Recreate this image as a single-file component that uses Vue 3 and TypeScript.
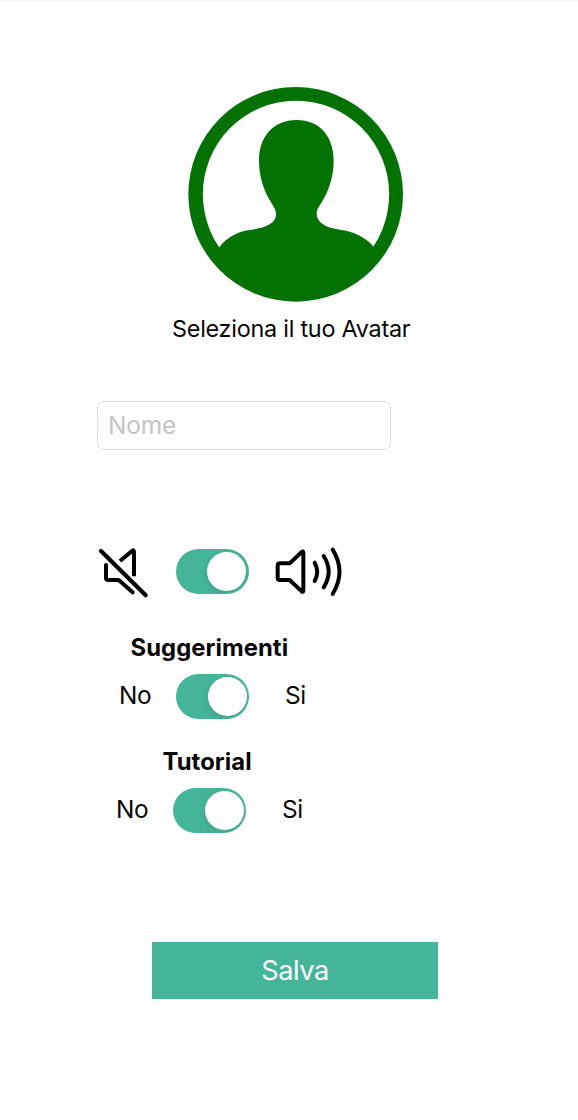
<script setup lang="ts">
import { ref } from 'vue'

interface Option {
  key: string
  title: string
  on: boolean
}

const name = ref('')
const audio = ref(true)
const options = ref<Option[]>([
  { key: 'hints', title: 'Suggerimenti', on: true },
  { key: 'tutorial', title: 'Tutorial', on: true },
])
</script>

<template>
  <main class="screen">
    <svg class="avatar" viewBox="0 0 690 690">
      <circle cx="347" cy="343" r="322" fill="#037103" />
      <ellipse cx="348" cy="343" rx="279.500" ry="281" fill="#fefefe" />
      <path
        fill="#037103"
        d="M350 120C420 120 461 170 461 242C461 290 446 333 425 367C415 383 410 390 410 402C411 427 437 444 480 449C520 454 556 471 579 498C575 560 460 640 348 640C236 640 122 560 118 501C143 468 177 454 213 449C260 443 287 429 288 405C289 392 283 383 273 367C252 333 237 290 237 242C237 170 280 120 350 120Z"
      />
    </svg>
    <p class="caption">Seleziona il tuo Avatar</p>

    <input v-model="name" class="name" type="text" placeholder="Nome" />

    <div class="audio">
      <svg class="muted" viewBox="0 0 170 210" fill="none" stroke="#000" stroke-linecap="round" stroke-linejoin="round">
        <g stroke-width="12">
          <path d="M90 78L127 47Q132 44 132 51V124" stroke-linecap="butt" />
          <path d="M48 90V128Q48 135 55 135H86L128 172" />
        </g>
        <path d="M33 48L167 181" stroke-width="12.500" />
      </svg>
      <button class="switch" :class="{ on: audio }" type="button" @click="audio = !audio"><span class="knob"></span></button>
      <svg class="loud" viewBox="0 0 300 210" fill="none" stroke="#000" stroke-width="12" stroke-linecap="round" stroke-linejoin="round">
        <path d="M60 85H89L125 51Q130 47 130 54V166Q130 173 125 169L89 135H60Q53 135 53 128V92Q53 85 60 85Z" />
        <path d="M164 83Q179 110 164 138M191 63Q221 110 191 157M218 44Q259 110 218 177" />
      </svg>
    </div>

    <section v-for="item in options" :key="item.key" class="option" :class="item.key">
      <h2>{{ item.title }}</h2>
      <div class="choice">
        <span class="no">No</span>
        <button class="switch" :class="{ on: item.on }" type="button" @click="item.on = !item.on"><span class="knob"></span></button>
        <span class="yes">Si</span>
      </div>
    </section>

    <button class="save" type="button">Salva</button>
  </main>
</template>

<style>
body {
  background: #fefefe;
}
</style>

<style scoped>
.screen {
  box-sizing: border-box;
  width: 578px;
  height: 1120px;
  padding-top: 79px;
  border-top: 1px solid #f5f5f5;
  display: flex;
  flex-direction: column;
  align-items: flex-start;
  overflow: hidden;
  background: #fefefe;
  color: #080808;
  font-family: Inter, "Liberation Sans", sans-serif;
}
.avatar {
  flex: none;
  width: 230px;
  height: 230px;
  margin-left: 180px;
}
.caption {
  margin: 3px 0 0 172px;
  font-size: 23.4px;
  line-height: 32px;
  letter-spacing: -0.25px;
  white-space: nowrap;
}
.name {
  box-sizing: border-box;
  width: 294px;
  height: 49px;
  margin: 56px 0 0 97px;
  padding: 0 10px 1px;
  border: 1px solid #dedede;
  border-radius: 7px;
  outline: none;
  background: #fefefe;
  color: #080808;
  font: 24.5px Inter, "Liberation Sans", sans-serif;
  letter-spacing: -0.2px;
}
.name::placeholder {
  color: #c5c5c7;
  opacity: 1;
}
.audio {
  display: flex;
  align-items: flex-start;
  height: 70px;
  margin: 85px 0 0 90px;
}
.muted {
  overflow: visible;
  width: 56.667px;
  height: 70px;
}
.loud {
  width: 100px;
  height: 70px;
  margin-left: 11px;
}
.switch {
  box-sizing: border-box;
  flex: none;
  display: flex;
  width: 73px;
  height: 45px;
  padding: 3px 2.5px;
  border: 0;
  border-radius: 23px;
  background: #d8d8d8;
}
.switch.on {
  justify-content: flex-end;
  background: #45b59a;
}
.audio .switch {
  margin: 14px 0 0 29.333px;
}
.knob {
  width: 39px;
  height: 39px;
  border-radius: 50%;
  background: #fefefe;
  box-shadow: -1px 2px 6px rgba(0, 0, 0, 0.1);
}
.option h2 {
  margin: 0;
  font-size: 23.8px;
  line-height: 32px;
  font-weight: 700;
  letter-spacing: 0.07px;
  white-space: nowrap;
}
.hints {
  margin: 27px 0 0 119px;
}
.tutorial {
  margin: 27px 0 0 116px;
}
.hints h2 {
  padding-left: 11.5px;
}
.tutorial h2 {
  padding-left: 46.5px;
}
.choice {
  display: flex;
  height: 45px;
  margin-top: 10px;
  font-size: 24.4px;
  line-height: 42px;
  letter-spacing: -0.4px;
}
.no {
  width: 57px;
}
.yes {
  margin-left: 36px;
}
.save {
  width: 286px;
  height: 57px;
  margin: 109px 0 0 152px;
  padding: 0;
  border: 0;
  background: #45b59a;
  color: #fefefe;
  font: 27.2px Inter, "Liberation Sans", sans-serif;
  letter-spacing: -0.5px;
}
</style>
